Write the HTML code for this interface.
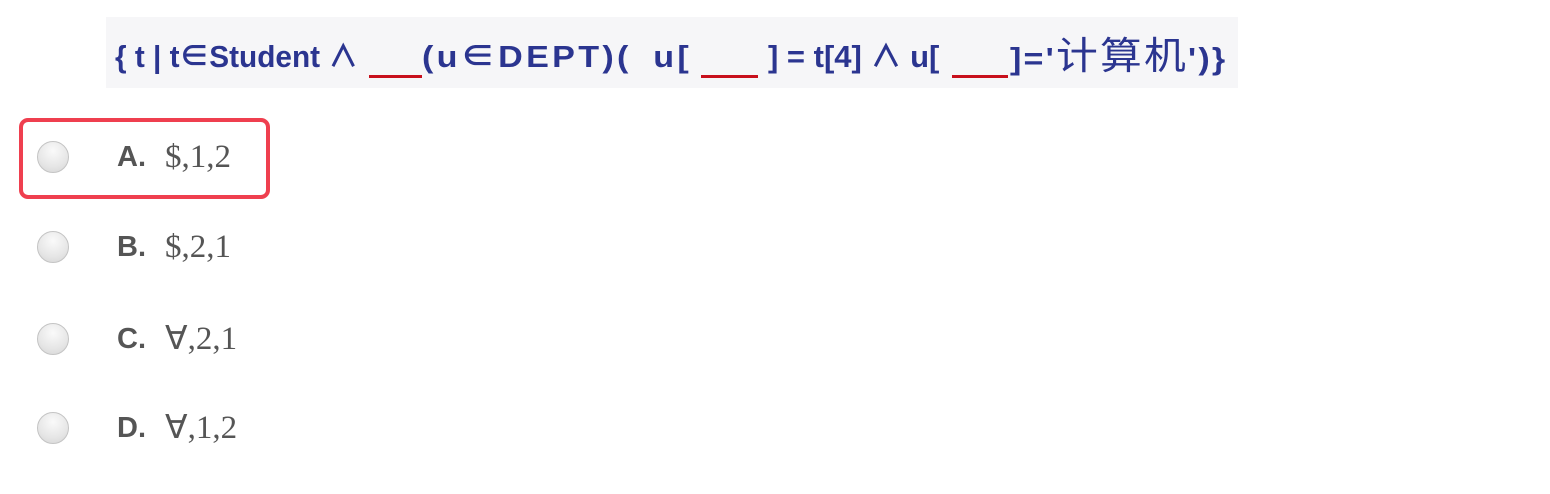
<!DOCTYPE html>
<html><head><meta charset="utf-8"><style>
body{margin:0;width:1550px;height:494px;background:#fff;position:relative;overflow:hidden;font-family:"Liberation Sans",sans-serif}
.img{position:absolute;left:106px;top:17px;width:1132px;height:71px;background:#f6f6f8}
.t{position:absolute;top:40px;font:bold 31px/34px "Liberation Sans","Noto Sans CJK SC",sans-serif;color:#2b3590;white-space:nowrap;transform:scaleX(0.98);transform-origin:left}
.c{font-size:34px;font-weight:normal}
.u{position:absolute;top:75px;height:3px;background:#c8101c}
.r{position:absolute;left:37px;width:32px;height:32px;border-radius:50%;border:1px solid #c4c4c4;background:radial-gradient(circle at 50% 30%,#fafafa,#e6e6e6 60%,#d4d4d4);box-sizing:border-box}
.l{position:absolute;left:117px;font:bold 29px/32px "Liberation Sans",sans-serif;color:#555}
.v{position:absolute;left:165px;font:33px/32px "Liberation Serif",serif;color:#555}
.box{position:absolute;left:19px;top:118px;width:251px;height:81px;border:4px solid #ef3f4f;border-radius:9px;box-sizing:border-box}
</style></head><body>
<div class="img"></div>
<div class="t" style="left:115px;transform:scaleX(0.96)">{ t | t∈Student ∧</div>
<div class="u" style="left:369px;width:53px"></div>
<div class="t" style="left:422px;transform:scaleX(1.1);letter-spacing:3px;word-spacing:8px">(u∈DEPT)( u[</div>
<div class="u" style="left:701px;width:57px"></div>
<div class="t" style="left:768px;transform:scaleX(1.0)">] = t[4] ∧ u[</div>
<div class="u" style="left:952px;width:56px"></div>
<div class="t" style="left:1010px;transform:scaleX(1.1);letter-spacing:2px">]='<span class="c" style="font-size:38px">计算机</span>')}</div>
<div class="box"></div>
<div class="r" style="top:141px"></div><div class="l" style="top:141px">A.</div><div class="v" style="top:141px">$,1,2</div>
<div class="r" style="top:231px"></div><div class="l" style="top:231px">B.</div><div class="v" style="top:231px">$,2,1</div>
<div class="r" style="top:323px"></div><div class="l" style="top:323px">C.</div><div class="v" style="top:323px">∀,2,1</div>
<div class="r" style="top:412px"></div><div class="l" style="top:412px">D.</div><div class="v" style="top:412px">∀,1,2</div>
</body></html>
